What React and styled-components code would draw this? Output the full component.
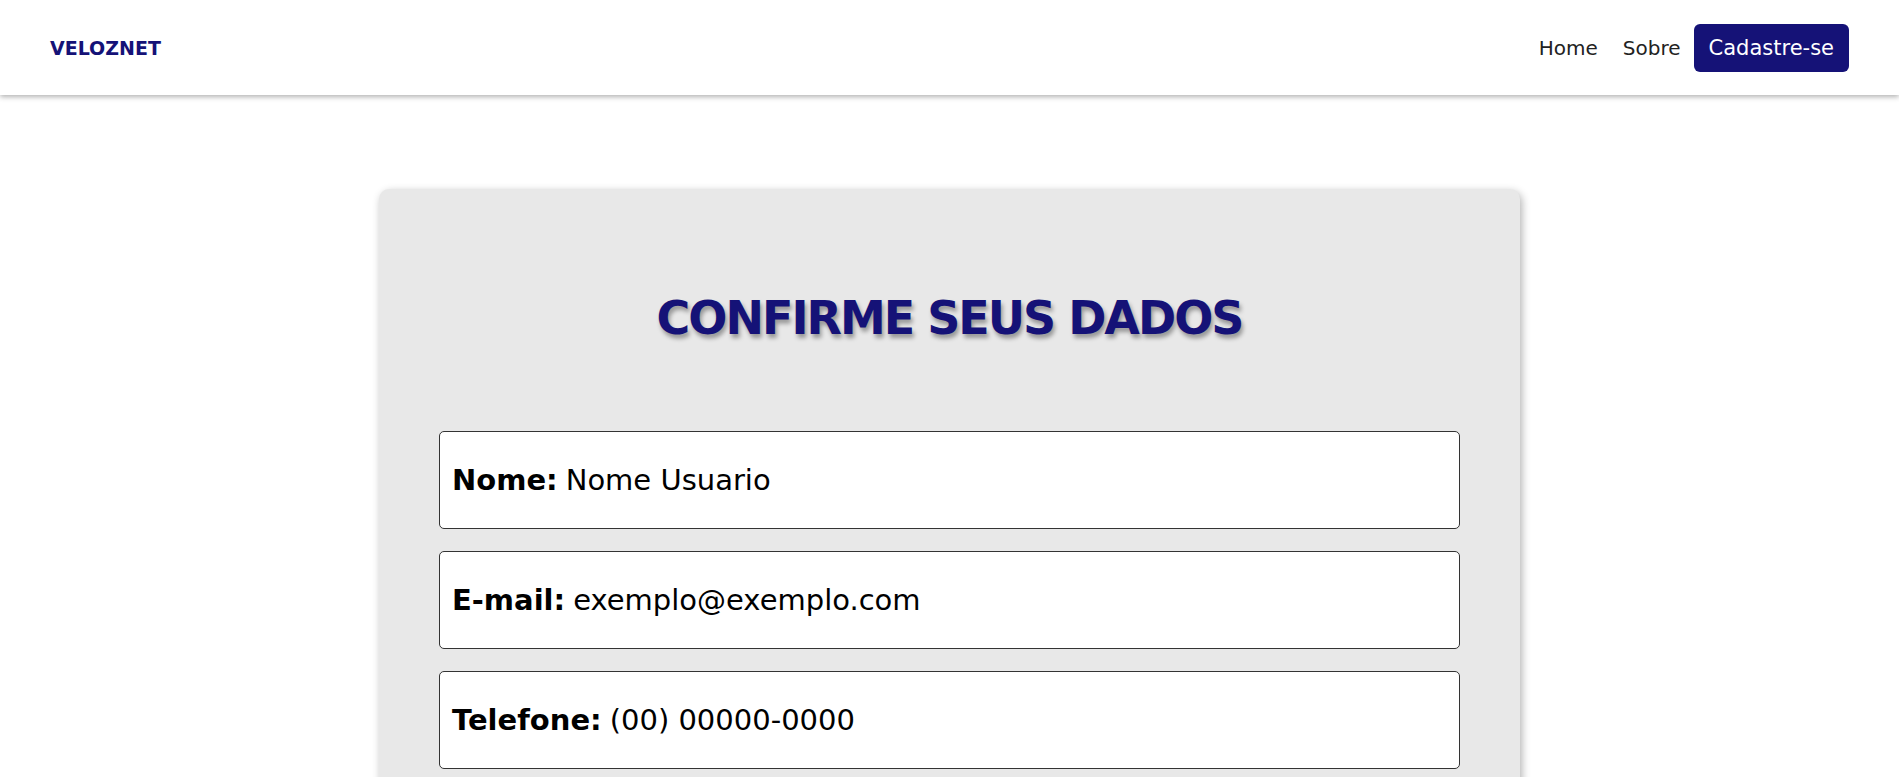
import * as React from 'react'
import styled, { createGlobalStyle } from 'styled-components'

const GlobalStyle = createGlobalStyle`
  body {
    margin: 0;
    background: #ffffff;
    font-family: "DejaVu Sans", "Liberation Sans", sans-serif;
  }
`

const Header = styled.header`
  height: 95px;
  padding: 0 50px;
  display: flex;
  justify-content: space-between;
  align-items: center;
  background: #ffffff;
  box-shadow: 0 2px 5px rgba(0, 0, 0, 0.3);
  position: relative;
  z-index: 1;
`

const Logo = styled.a`
  color: #151277;
  font-size: 19px;
  font-weight: bold;
  text-decoration: none;
`

const Nav = styled.nav`
  display: flex;
  align-items: center;
`

const NavLink = styled.a`
  color: #222;
  font-size: 20px;
  margin-right: ${(p) => p.$space || 25}px;
  text-decoration: none;
`

const CtaButton = styled.a`
  display: flex;
  align-items: center;
  height: 48px;
  padding: 0 15px;
  border-radius: 6px;
  background: #151277;
  color: #ffffff;
  font-size: 21px;
  text-decoration: none;
`

const Main = styled.main`
  padding: 94px 0 60px;
`

const Card = styled.section`
  width: 1141px;
  box-sizing: border-box;
  margin: 0 auto;
  padding: 102px 60px 60px;
  background: #e8e8e8;
  border-radius: 10px;
  box-shadow: 2px 3px 8px rgba(0, 0, 0, 0.3);
`

const Title = styled.h1`
  margin: 0 0 85px;
  text-align: center;
  color: #151277;
  font-size: 46px;
  font-weight: 900;
  letter-spacing: -2px;
  line-height: 1.2;
  text-shadow: 2px 4px 4px rgba(0, 0, 0, 0.35);
`

const Fields = styled.div`
  display: flex;
  flex-direction: column;
  gap: 22px;
`

const Field = styled.div`
  height: 98px;
  box-sizing: border-box;
  display: flex;
  align-items: center;
  padding: 0 12px;
  background: #ffffff;
  border: 1px solid #333;
  border-radius: 5px;
  font-size: 29px;
  color: #000;
`

const Label = styled.strong`
  font-weight: bold;
  margin-right: 8px;
`

const data = [
  { label: 'Nome:', value: 'Nome Usuario' },
  { label: 'E-mail:', value: 'exemplo@exemplo.com' },
  { label: 'Telefone:', value: '(00) 00000-0000' },
]

const App = () => (
  <>
    <GlobalStyle />
    <Header>
      <Logo href="#">VELOZNET</Logo>
      <Nav>
        <NavLink href="#">Home</NavLink>
        <NavLink href="#" $space={13}>Sobre</NavLink>
        <CtaButton href="#">Cadastre-se</CtaButton>
      </Nav>
    </Header>
    <Main>
      <Card>
        <Title>CONFIRME SEUS DADOS</Title>
        <Fields>
          {data.map((item) => (
            <Field key={item.label}>
              <Label>{item.label}</Label>
              {item.value}
            </Field>
          ))}
        </Fields>
      </Card>
    </Main>
  </>
)

export default App
